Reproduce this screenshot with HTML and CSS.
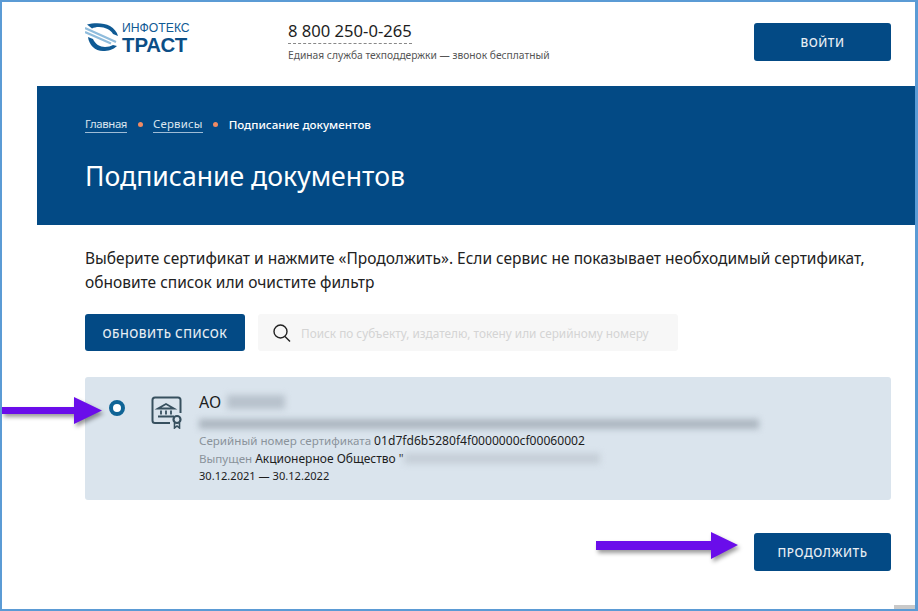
FILE: index.html
```html
<!DOCTYPE html>
<html lang="ru">
<head>
    <meta charset="UTF-8">
    <meta name="viewport" content="width=device-width, initial-scale=1.0">
    <title>Подписание документов</title>
    <link rel="stylesheet" href="styles.css">
</head>
<body>
    <div class="frame">
        <header class="header">
            <a class="logo" href="#">
                <svg class="logo-mark" width="33" height="28" viewBox="0 0 33 28">
                    <path d="M2 1.5 C9 -0.5 19 -0.5 25 3 C29 5.5 32 9 33 13 L28 11 C26 7 20 4 14 4 C11 4 9 4.5 7 5.5 Z" fill="#0f5a94"/>
                    <path d="M3 14 L8 16 C10 21 15 24 20 24 C23 24 26 23 28 22 L32 23 C28 27 23 28 18 28 C10 28 4 22 3 14 Z" fill="#0f5a94"/>
                    <path d="M0 5 L31 19 M0 9 L26 20.5" stroke="#8fbcdc" stroke-width="2.2" fill="none"/>
                </svg>
                <span class="logo-text">
                    <span class="logo-top">ИНФОТЕКС</span>
                    <span class="logo-bottom">ТРАСТ</span>
                </span>
            </a>
            <div class="phone">
                <a class="phone-number" href="#">8 800 250-0-265</a>
                <div class="phone-note">Единая служба техподдержки — звонок бесплатный</div>
            </div>
            <button class="btn btn-login" type="button">ВОЙТИ</button>
        </header>

        <section class="hero">
            <nav class="crumbs">
                <a class="crumb-home" href="#">Главная</a>
                <span class="dot"></span>
                <a class="crumb-services" href="#">Сервисы</a>
                <span class="dot"></span>
                <span class="crumb-current">Подписание документов</span>
            </nav>
            <h1>Подписание документов</h1>
        </section>

        <main class="content">
            <p class="intro">Выберите сертификат и нажмите «Продолжить». Если сервис не показывает необходимый сертификат, обновите список или очистите фильтр</p>

            <div class="toolbar">
                <button class="btn btn-refresh" type="button">ОБНОВИТЬ СПИСОК</button>
                <div class="search">
                    <svg width="20" height="20" viewBox="0 0 20 20" fill="none" stroke="#222" stroke-width="1.4">
                        <circle cx="8.5" cy="8.5" r="6.5"/>
                        <path d="M13 13.5 L18 18.5"/>
                    </svg>
                    <span class="search-text">Поиск по субъекту, издателю, токену или серийному номеру</span>
                </div>
            </div>

            <div class="cert">
                <span class="radio"></span>
                <svg class="cert-icon" width="32" height="33" viewBox="0 0 32 33" fill="none" stroke="#37505f" stroke-width="2">
                    <path d="M19 27 H4 Q1.5 27 1.5 24.5 V4 Q1.5 1.5 4 1.5 H27 Q29.5 1.5 29.5 4 V17"/>
                    <path d="M7 12.5 L15 8 L23 12.5 Z M7 20.5 H23 M10 14.5 V18.5 M15 14.5 V18.5 M20 14.5 V18.5" stroke-width="1.8"/>
                    <circle cx="26" cy="23.5" r="3.5" stroke-width="2.2"/>
                    <path d="M23.5 27 V32 L26 30 L28.5 32 V27" stroke-width="1.6"/>
                </svg>
                <div class="cert-body">
                    <div class="cert-name">АО <span class="blur blur-name"></span></div>
                    <div class="blur blur-line"></div>
                    <div class="cert-row"><span class="muted">Серийный номер сертификата</span><span class="serial">01d7fd6b5280f4f0000000cf00060002</span></div>
                    <div class="cert-row"><span class="muted">Выпущен</span><span class="issuer">Акционерное Общество "</span><span class="blur blur-issuer"></span></div>
                    <div class="cert-row cert-dates">30.12.2021 — 30.12.2022</div>
                </div>
            </div>

            <div class="actions">
                <button class="btn btn-next" type="button">ПРОДОЛЖИТЬ</button>
            </div>
        </main>

        <!-- стрелки поверх скриншота -->
        <svg class="arrow arrow-left" width="100" height="28" viewBox="0 0 100 28">
            <path d="M0 10 H72 V0 L100 13.5 L72 27 V17 H0 Z" class="arrow-fill"/>
        </svg>
        <svg class="arrow arrow-right" width="142" height="27" viewBox="0 0 142 27">
            <path d="M0 9 H115 V0 L142 13 L115 27 V18 H0 Z" class="arrow-fill"/>
        </svg>
        <div class="stamp"></div>
    </div>
</body>
</html>
```

FILE: styles.css
```css
* {
    box-sizing: border-box;
}

body {
    margin: 0;
    font-family: "Noto Sans", Arial, sans-serif;
    color: #1d1d1d;
    background-color: white;
}

.frame {
    position: relative;
    width: 918px;
    height: 611px;
    border: 2px solid #5b9bd5;
    border-right-width: 3px;
    overflow: hidden;
}

.header {
    display: flex;
    align-items: flex-start;
    height: 84px;
    padding: 21px 24px 0 83px;
}

.logo {
    display: flex;
    gap: 4px;
    text-decoration: none;
    width: 203px;
}

.logo-text {
    display: flex;
    flex-direction: column;
    margin-top: -2px;
    font-family: "Liberation Sans", Arial, sans-serif;
    color: #0f5a94;
}

.logo-top {
    font-size: 12.2px;
    line-height: 14px;
}

.logo-bottom {
    font-size: 20.4px;
    line-height: 20px;
    font-weight: bold;
    color: #0c4e86;
}

.phone {
    flex: 1;
    margin-top: -3px;
}

.phone-number {
    display: inline-block;
    font-size: 16.6px;
    line-height: 20px;
    color: #1d1d1d;
    text-decoration: none;
    border-bottom: 1px dashed #888;
    padding-bottom: 2px;
}

.phone-note {
    font-size: 10.25px;
    line-height: 14px;
    margin-top: 4px;
    color: #555;
}

.btn {
    display: block;
    border: none;
    border-radius: 3px;
    background-color: #034a85;
    color: #e8eef4;
    font-family: inherit;
    font-size: 11.8px;
    font-weight: 500;
    letter-spacing: 0.5px;
    cursor: pointer;
}

.btn-login {
    width: 137px;
    height: 38px;
}

.hero {
    margin-left: 35px;
    height: 139px;
    padding: 30px 48px 0;
    background-color: #034a85;
    color: white;
}

.crumbs {
    display: flex;
    align-items: center;
    font-size: 11.4px;
    line-height: 16px;
}

.crumbs a {
    color: #dbe6f0;
    text-decoration: none;
    border-bottom: 1px solid #9fbcd6;
}

.crumbs .crumb-home {
    letter-spacing: -0.4px;
}

.crumbs .crumb-services {
    letter-spacing: 0.2px;
}

.dot {
    width: 5px;
    height: 5px;
    margin: 0 10.5px;
    border-radius: 50%;
    background-color: #f08a63;
}

.crumb-current {
    font-size: 11.6px;
    font-weight: 500;
}

h1 {
    margin: 26px 0 0;
    font-size: 26.6px;
    line-height: 34px;
    font-weight: 400;
}

.content {
    padding: 21px 24px 0 83px;
}

.intro {
    margin: 0;
    font-size: 15.5px;
    line-height: 24px;
    color: #222;
}

.toolbar {
    display: flex;
    gap: 13px;
    margin-top: 20px;
}

.btn-refresh {
    width: 160px;
    height: 37px;
}

.search {
    display: flex;
    align-items: center;
    gap: 9px;
    width: 420px;
    height: 37px;
    padding-left: 14px;
    background-color: #f7f7f7;
    border-radius: 3px;
}

.search-text {
    font-size: 11.8px;
    color: #d4d4d4;
}

.cert {
    position: relative;
    display: flex;
    height: 123px;
    margin-top: 26px;
    padding: 15px 0 0 66px;
    background-color: #dae4ed;
    border-radius: 3px;
}

.radio {
    position: absolute;
    left: 24px;
    top: 23px;
    width: 16px;
    height: 16px;
    border: 4px solid #0f6496;
    border-radius: 50%;
    background-color: white;
}

.cert-icon {
    margin-top: 4px;
}

.cert-body {
    margin-left: 16px;
}

.cert-name {
    display: flex;
    align-items: center;
    font-size: 16px;
    line-height: 20px;
    gap: 3px;
}

.cert-row {
    display: flex;
    align-items: center;
    gap: 3px;
    font-size: 11.6px;
    line-height: 17.5px;
    white-space: pre;
}

.serial {
    font-size: 12.1px;
}

.issuer {
    font-size: 12px;
}

.cert-dates {
    font-size: 11.1px;
}

.muted {
    color: #8a939b;
}

.blur {
    display: block;
    background-color: #b8c2cc;
    filter: blur(3px);
}

.blur-name {
    width: 58px;
    height: 14px;
    margin-left: 3px;
}

.blur-line {
    width: 560px;
    height: 10px;
    margin: 7px 0 3px;
    background-color: #adb7c1;
}

.blur-issuer {
    width: 196px;
    height: 11px;
    margin-left: -3px;
    background-color: #c6cfd8;
}

.actions {
    display: flex;
    justify-content: flex-end;
    margin-top: 33px;
}

.btn-next {
    width: 137px;
    height: 38px;
}

.arrow {
    position: absolute;
    overflow: visible;
    filter: drop-shadow(2px 3px 2px rgba(0, 0, 0, 0.4));
}

.arrow-fill {
    fill: #6a0dea;
}

.arrow-left {
    left: 0;
    top: 395px;
}

.arrow-right {
    left: 594px;
    top: 530px;
}

.stamp {
    position: absolute;
    right: 0;
    bottom: 0;
    width: 21px;
    height: 4px;
    background-color: #c9c9c9;
}
```
